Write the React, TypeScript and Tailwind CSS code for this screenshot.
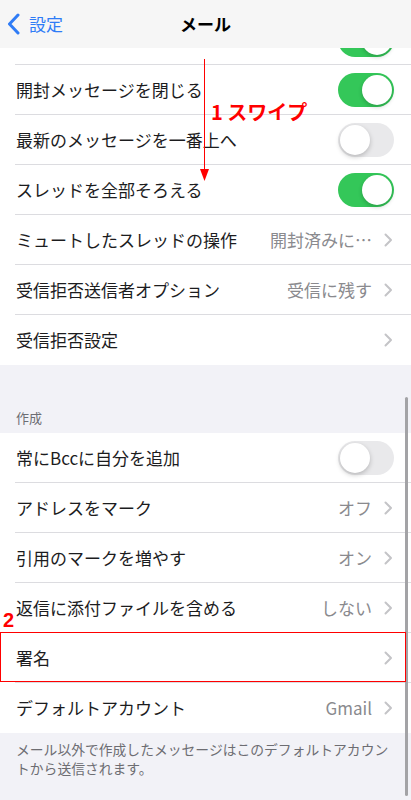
import React from "react";

const JP = { fontFamily: '"Noto Sans CJK JP", "Noto Sans", sans-serif' };

function Toggle({ on }: { on: boolean }) {
  return on ? (
    <div className="relative h-[34px] w-[56px] shrink-0 rounded-full bg-[#34c759]">
      <div className="absolute right-[2px] top-[2px] h-[30px] w-[30px] rounded-full bg-white shadow-[0_2px_4px_rgba(0,0,0,0.2)]" />
    </div>
  ) : (
    <div className="relative h-[34px] w-[56px] shrink-0 rounded-full bg-[#e9e9eb]">
      <div className="absolute left-[2px] top-[2px] h-[30px] w-[30px] rounded-full bg-white shadow-[0_2px_5px_rgba(0,0,0,0.22)]" />
    </div>
  );
}

function Chevron() {
  return (
    <svg width="9" height="14" viewBox="0 0 9 14" className="ml-[12px] mr-[1px] shrink-0">
      <path d="M1.5 1.5 L7 7 L1.5 12.5" fill="none" stroke="#c4c4c7" strokeWidth="2" strokeLinecap="round" strokeLinejoin="round" />
    </svg>
  );
}

type RowProps = { label: string; value?: string; toggle?: boolean; chevron?: boolean; last?: boolean };

function Row({ label, value, toggle, chevron, last }: RowProps) {
  return (
    <div className="bg-white pl-[15px]">
      <div
        className={
          "flex h-[50px] items-center pl-[1px] pr-[17px] " +
          (last ? "" : "border-b border-[#dcdce0]")
        }
      >
        <span className="flex-1 truncate text-[17px] text-[#1c1c1e]">{label}</span>
        {value && <span className="ml-3 text-[17px] text-[#8a8a8e]">{value}</span>}
        {toggle !== undefined && <Toggle on={toggle} />}
        {chevron && <Chevron />}
      </div>
    </div>
  );
}

export default function App() {
  return (
    <div className="relative h-[800px] w-[411px] overflow-hidden bg-[#f2f2f7]" style={JP}>
      {/* Nav bar */}
      <div className="relative flex h-[48px] items-center bg-[#f6f6f6]">
        <div className="flex items-center pl-[7px] text-[#2f7cf6]">
          <svg width="13" height="22" viewBox="0 0 13 22">
            <path d="M11 2 L2.5 11 L11 20" fill="none" stroke="#2f7cf6" strokeWidth="3" strokeLinecap="round" strokeLinejoin="round" />
          </svg>
          <span className="ml-[9px] text-[17px]">設定</span>
        </div>
        <div className="absolute left-0 right-0 top-0 flex h-[48px] items-center justify-center">
          <span className="text-[17px] font-bold text-black">メール</span>
        </div>
      </div>

      {/* partially scrolled row */}
      <div className="h-[17px] overflow-hidden bg-white pl-[15px]">
        <div className="-mt-[33px] flex h-[50px] items-center justify-end border-b border-[#dcdce0] pr-[17px]">
          <Toggle on={true} />
        </div>
      </div>

      <Row label="開封メッセージを閉じる" toggle={true} />
      <Row label="最新のメッセージを一番上へ" toggle={false} />
      <Row label="スレッドを全部そろえる" toggle={true} />
      <Row label="ミュートしたスレッドの操作" value="開封済みに…" chevron />
      <Row label="受信拒否送信者オプション" value="受信に残す" chevron />
      <Row label="受信拒否設定" chevron last />

      <div className="flex h-[68px] items-end pb-[7px] pl-[16px]">
        <span className="text-[13px] leading-[16px] text-[#6d6d72]">作成</span>
      </div>

      <Row label="常にBccに自分を追加" toggle={false} />
      <Row label="アドレスをマーク" value="オフ" chevron />
      <Row label="引用のマークを増やす" value="オン" chevron />
      <Row label="返信に添付ファイルを含める" value="しない" chevron />
      <Row label="署名" chevron />
      <Row label="デフォルトアカウント" value="Gmail" chevron last />

      <div className="px-[16px] pt-[7px] text-[13.8px] leading-[19px] text-[#6d6d72]">
        メール以外で作成したメッセージはこのデフォルトアカウントから送信されます。
      </div>

      {/* scroll indicator */}
      <div className="absolute left-[405px] top-[397px] h-[399px] w-[3px] rounded-full bg-[#a3a3a6]" />

      {/* annotation: swipe arrow */}
      <div className="absolute left-[203.5px] top-[59px] h-[112px] w-[1.5px] bg-[#ff0000]" />
      <svg className="absolute left-[200px] top-[169px]" width="9" height="12" viewBox="0 0 9 12">
        <path d="M0 0 L9 0 L4.5 12 Z" fill="#ff0000" />
      </svg>
      <div
        className="absolute left-[211px] top-[99px] text-[20px] font-bold leading-[26px] text-[#ff0000]"
        style={JP}
      >
        1 スワイプ
      </div>

      {/* annotation: 2 + box */}
      <div
        className="absolute left-[3px] top-[609px] text-[20px] font-bold leading-[22px] text-[#ff0000]"
        style={{ fontFamily: '"Liberation Sans", Arial, sans-serif' }}
      >
        2
      </div>
      <div className="absolute left-0 top-[632px] h-[50px] w-[406px] border border-[#ff0000]" />
    </div>
  );
}
